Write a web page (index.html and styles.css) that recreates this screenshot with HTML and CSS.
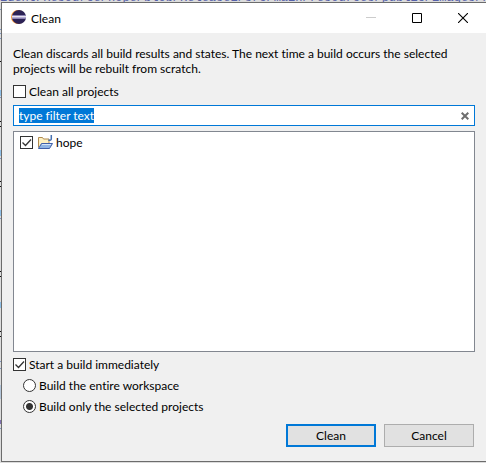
FILE: index.html
```html
<!DOCTYPE html>
<html lang="en">
<head>
<meta charset="utf-8">
<title>Clean</title>
<link rel="stylesheet" href="styles.css">
</head>
<body>
<div class="backdrop" aria-hidden="true">
  <div class="code-line">identFResource/hope/blob/Release1/src/main/resources/public/images/n</div>
  <svg class="code-edge" width="2" height="463" viewBox="0 0 2 463">
    <path stroke="#8098c4" d="M0 9.500h2M0 29.500h2M0 33.500h2M0 38.500h2M0 97.500h2M0 158.500h2M0 218.500h2M0 361.500h2M0 368.500h2M0 428.500h2"/>
    <path stroke="#8fc0e8" stroke-width="6" d="M0 93h2M0 153h2M0 213h2M0 305h2"/>
    <path stroke="#b4c6da" stroke-width="14" d="M0 392h2"/>
    <path stroke="#111" d="M0 61.500h2M0 121.500h2M0 126.500h2M0 181.500h2M0 186.500h2M0 271.500h2M0 276.500h2M0 331.500h2M0 336.500h2"/>
    <path stroke="#8070b0" stroke-width="4" d="M0 422h2"/>
  </svg>
</div>
<main class="dialog" role="dialog" aria-labelledby="dialog-title">
  <header class="titlebar">
    <svg class="logo" width="16" height="16" viewBox="0 0 16 16">
      <circle cx="7" cy="7" r="7" fill="#f79433"/>
      <circle cx="8" cy="7" r="7" fill="#2c2255"/>
      <path fill="#8c82b4" d="M1 5h14v1H1zM1 8h14v1H1z"/>
      <path fill="#e8e4f2" d="M1 6h14v1H1z"/>
      <path fill="#b5acd2" d="M1 7h14v1H1z"/>
    </svg>
    <h1 class="title" id="dialog-title">Clean</h1>
    <div class="window-controls">
      <button class="window-button" type="button" aria-label="Minimize" disabled><svg width="10" height="10"><path stroke="#ccc" d="M0 4.500h10"/></svg></button>
      <button class="window-button" type="button" aria-label="Maximize"><svg width="10" height="10"><path fill="none" stroke="#000" d="M.5.500h9v9h-9z"/></svg></button>
      <button class="window-button" type="button" aria-label="Close"><svg width="10" height="10"><path stroke="#000" stroke-width="1.100" d="M0 0l10 10M10 0L0 10"/></svg></button>
    </div>
  </header>
  <form class="content">
    <p class="message">Clean discards all build results and states. The next time a build occurs the selected projects will be rebuilt from scratch.</p>
    <label class="option"><input class="check" type="checkbox">Clean all projects</label>
    <div class="filter">
      <input class="filter-input" id="filter" type="text" value="type filter text" aria-label="Filter projects" autofocus>
      <button class="clear" type="button" aria-label="Clear"><svg width="8" height="8"><path stroke="#6e6e6e" stroke-width="2" d="M.7.700l6.600 6.600M7.300.700L.7 7.300"/></svg></button>
    </div>
    <ul class="projects">
      <li><label class="project"><input class="check" type="checkbox" checked>
        <svg class="folder" width="16" height="15" viewBox="0 0 16 15">
          <path fill="#fdf0c0" stroke="#b08a50" d="M1.500 12.500v-10h4l1 1.500h5.500v4"/>
          <path fill="#8fb4e4" stroke="#3f5fa8" d="M1.500 13.500l3-5h11l-3 5z"/>
          <path stroke="#d5e6fa" d="M5 9.500h9"/>
          <path fill="none" stroke="#4670b0" stroke-width="1.500" d="M14.300 0v4q0 1.500-3 1.300"/>
        </svg>hope</label></li>
    </ul>
    <label class="option"><input class="check" type="checkbox" checked>Start a build immediately</label>
    <label class="option nested"><input class="radio" type="radio" name="scope">Build the entire workspace</label>
    <label class="option nested"><input class="radio" type="radio" name="scope" checked>Build only the selected projects</label>
    <footer class="actions">
      <button class="button primary" type="button">Clean</button>
      <button class="button" type="button">Cancel</button>
    </footer>
  </form>
</main>
<script src="script.js"></script>
</body>
</html>
```
FILE: styles.css
```css
* { box-sizing: border-box; }

body {
  margin: 0;
  min-height: 100vh;
  padding: 2px 2px 1px 1px;
  display: flex;
  background: #fff;
  color: #000;
  font: 12px/15px Lato, "Open Sans", sans-serif;
  font-variant-ligatures: none;
}

.backdrop {
  position: absolute;
  inset: 0 2px 0 0;
  overflow: hidden;
  background: #dcdcdc;
}
.code-line {
  position: absolute;
  top: -8px;
  left: 0;
  color: #5560a8;
  font: 12px/13px "Liberation Mono", monospace;
  white-space: nowrap;
}
.code-edge { position: absolute; top: 0; left: 0; }

.dialog {
  position: relative;
  flex: 1;
  display: flex;
  flex-direction: column;
  border: 1px solid #6c6c6c;
  border-right: 0;
  background: #f0f0f0;
}

.titlebar {
  display: flex;
  align-items: center;
  height: 30px;
  padding-left: 9px;
  background: #fff;
}
.title {
  margin: 0 auto 0 4px;
  font: inherit;
}
.window-controls { display: flex; }
.window-button {
  display: grid;
  place-items: center;
  width: 46px;
  height: 28px;
  padding: 0;
  border: 0;
  background: none;
}

.content {
  flex: 1;
  display: flex;
  flex-direction: column;
  padding: 13px 11px 14px;
}
.message { margin: 0 0 7px; }

.option {
  display: flex;
  align-items: center;
  gap: 3px;
  height: 16px;
}
.nested {
  margin: 5px 0 0 10px;
}

.check,
.radio {
  appearance: none;
  flex: none;
  width: 13px;
  height: 13px;
  margin: 0;
  border: 1px solid #333;
  background: #fff center no-repeat;
}
.check:checked {
  background-image: url("data:image/svg+xml,%3Csvg xmlns='http://www.w3.org/2000/svg' width='11' height='11'%3E%3Cpath fill='none' stroke='%23333' stroke-width='1.300' d='M1.500 5.500l3 3 5.500-6'/%3E%3C/svg%3E");
}
.radio { border-radius: 50%; }
.radio:checked {
  background-image: radial-gradient(circle, #333 3px, transparent 4px);
}

.filter {
  display: flex;
  height: 21px;
  margin: 6px 0 5px;
  border: 1px solid #0078d7;
  background: #fff;
}
.filter-input {
  flex: 1;
  min-width: 0;
  padding: 0 5px;
  border: 0;
  outline: 0;
  background: none;
  font: inherit;
}
.filter-input::selection {
  background: #0078d7;
  color: #fff;
}
.clear {
  display: grid;
  place-items: center;
  width: 18px;
  padding: 0;
  border: 0;
  background: none;
}

.projects {
  flex: 1;
  margin: 0 0 4px;
  padding: 1px 6px;
  border: 1px solid #828790;
  background: #fff;
  list-style: none;
}
.project {
  display: flex;
  align-items: center;
  height: 18px;
}
.folder { margin: 0 3px 0 4px; }

.actions {
  display: flex;
  justify-content: flex-end;
  gap: 8px;
  margin-top: 10px;
  padding-right: 1px;
}
.button {
  width: 90px;
  height: 23px;
  padding: 0;
  border: 1px solid #adadad;
  background: #e1e1e1;
  color: #000;
  font: inherit;
}
.primary { border: 2px solid #0078d7; }
```
FILE: script.js
```js
const filter = document.getElementById("filter");
filter.focus();
filter.select();
```
